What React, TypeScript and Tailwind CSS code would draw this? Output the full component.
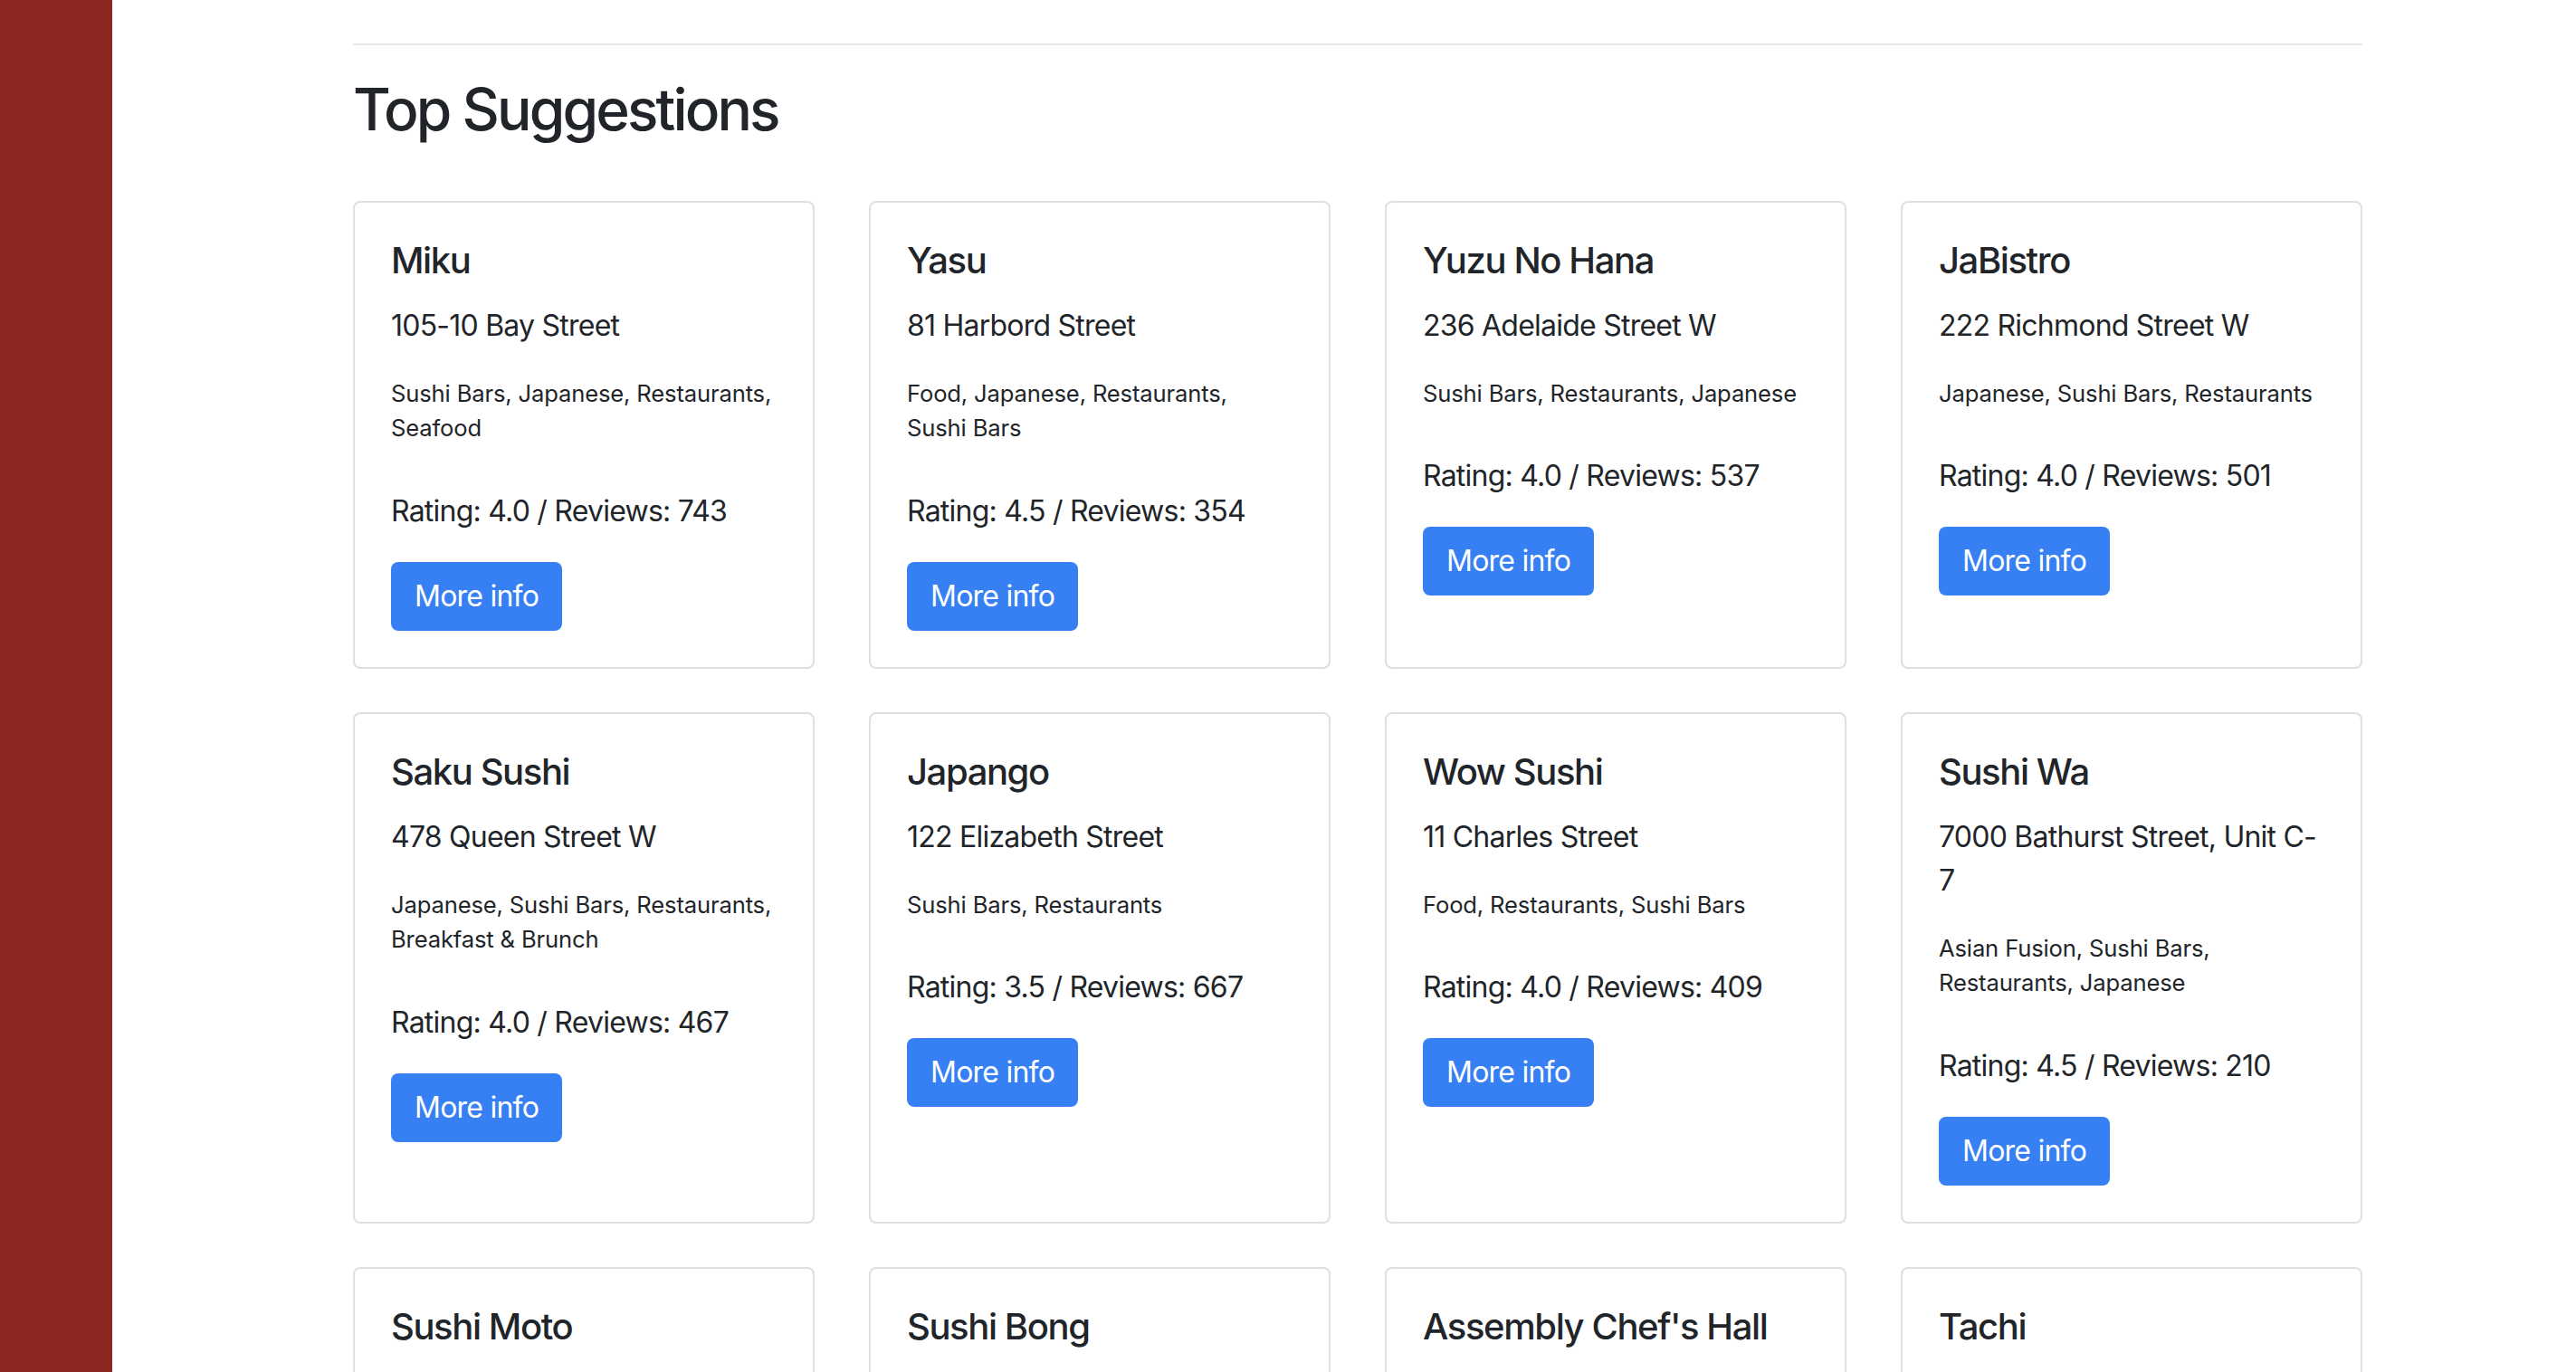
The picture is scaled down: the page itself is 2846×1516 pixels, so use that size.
type Place = {
  name: string;
  address: string;
  categories: string;
  rating: string;
  reviews: number;
};

const places: Place[] = [
  { name: "Miku", address: "105-10 Bay Street", categories: "Sushi Bars, Japanese, Restaurants, Seafood", rating: "4.0", reviews: 743 },
  { name: "Yasu", address: "81 Harbord Street", categories: "Food, Japanese, Restaurants, Sushi Bars", rating: "4.5", reviews: 354 },
  { name: "Yuzu No Hana", address: "236 Adelaide Street W", categories: "Sushi Bars, Restaurants, Japanese", rating: "4.0", reviews: 537 },
  { name: "JaBistro", address: "222 Richmond Street W", categories: "Japanese, Sushi Bars, Restaurants", rating: "4.0", reviews: 501 },
  { name: "Saku Sushi", address: "478 Queen Street W", categories: "Japanese, Sushi Bars, Restaurants, Breakfast & Brunch", rating: "4.0", reviews: 467 },
  { name: "Japango", address: "122 Elizabeth Street", categories: "Sushi Bars, Restaurants", rating: "3.5", reviews: 667 },
  { name: "Wow Sushi", address: "11 Charles Street", categories: "Food, Restaurants, Sushi Bars", rating: "4.0", reviews: 409 },
  { name: "Sushi Wa", address: "7000 Bathurst Street, Unit C-7", categories: "Asian Fusion, Sushi Bars, Restaurants, Japanese", rating: "4.5", reviews: 210 },
  { name: "Sushi Moto", address: "4 Finch Avenue W", categories: "Sushi Bars, Japanese", rating: "4.0", reviews: 198 },
  { name: "Sushi Bong", address: "1000 Queen Street W", categories: "Sushi Bars, Korean", rating: "4.0", reviews: 254 },
  { name: "Assembly Chef's Hall", address: "111 Richmond Street W", categories: "Food Court, Japanese", rating: "4.0", reviews: 187 },
  { name: "Tachi", address: "7 Queen Street E", categories: "Sushi Bars, Japanese", rating: "4.5", reviews: 95 },
];

function PlaceCard({ place }: { place: Place }) {
  return (
    <div className="h-full rounded-[8px] border-2 border-[#dfdfdf] bg-white p-[40px]">
      <h5 className="mb-[24px] text-[40px] font-medium leading-[48px] tracking-[-0.035em]">{place.name}</h5>
      <p className="mb-[32px] text-[32px] leading-[48px] tracking-[-0.024em]">{place.address}</p>
      <p className="mb-[48px] text-[25.6px] leading-[38.4px] tracking-[-0.006em]">{place.categories}</p>
      <p className="mb-[32px] text-[32px] leading-[48px] tracking-[-0.024em]">
        Rating: {place.rating} / Reviews: {place.reviews}
      </p>
      <button className="rounded-[8px] bg-[#3780f4] px-[26px] py-[14px] text-[32px] leading-[48px] tracking-[-0.024em] text-white">
        More info
      </button>
    </div>
  );
}

export default function App() {
  return (
    <div className="flex h-screen overflow-hidden bg-white font-['Inter','Liberation_Sans',sans-serif] text-[#212529]">
      <aside className="h-full w-[124px] shrink-0 bg-[#8b2621]" />
      <main className="flex-1 pl-[266px] pr-[236px] pt-[48px]">
        <hr className="border-0 border-t-2 border-[#e6e6e6]" />
        <h2 className="mb-[63px] mt-[32px] text-[64px] font-medium leading-[77px] tracking-[-0.045em]">Top Suggestions</h2>
        <div className="grid grid-cols-4 gap-x-[60px] gap-y-[48px]">
          {places.map((p) => (
            <PlaceCard key={p.name} place={p} />
          ))}
        </div>
      </main>
    </div>
  );
}
